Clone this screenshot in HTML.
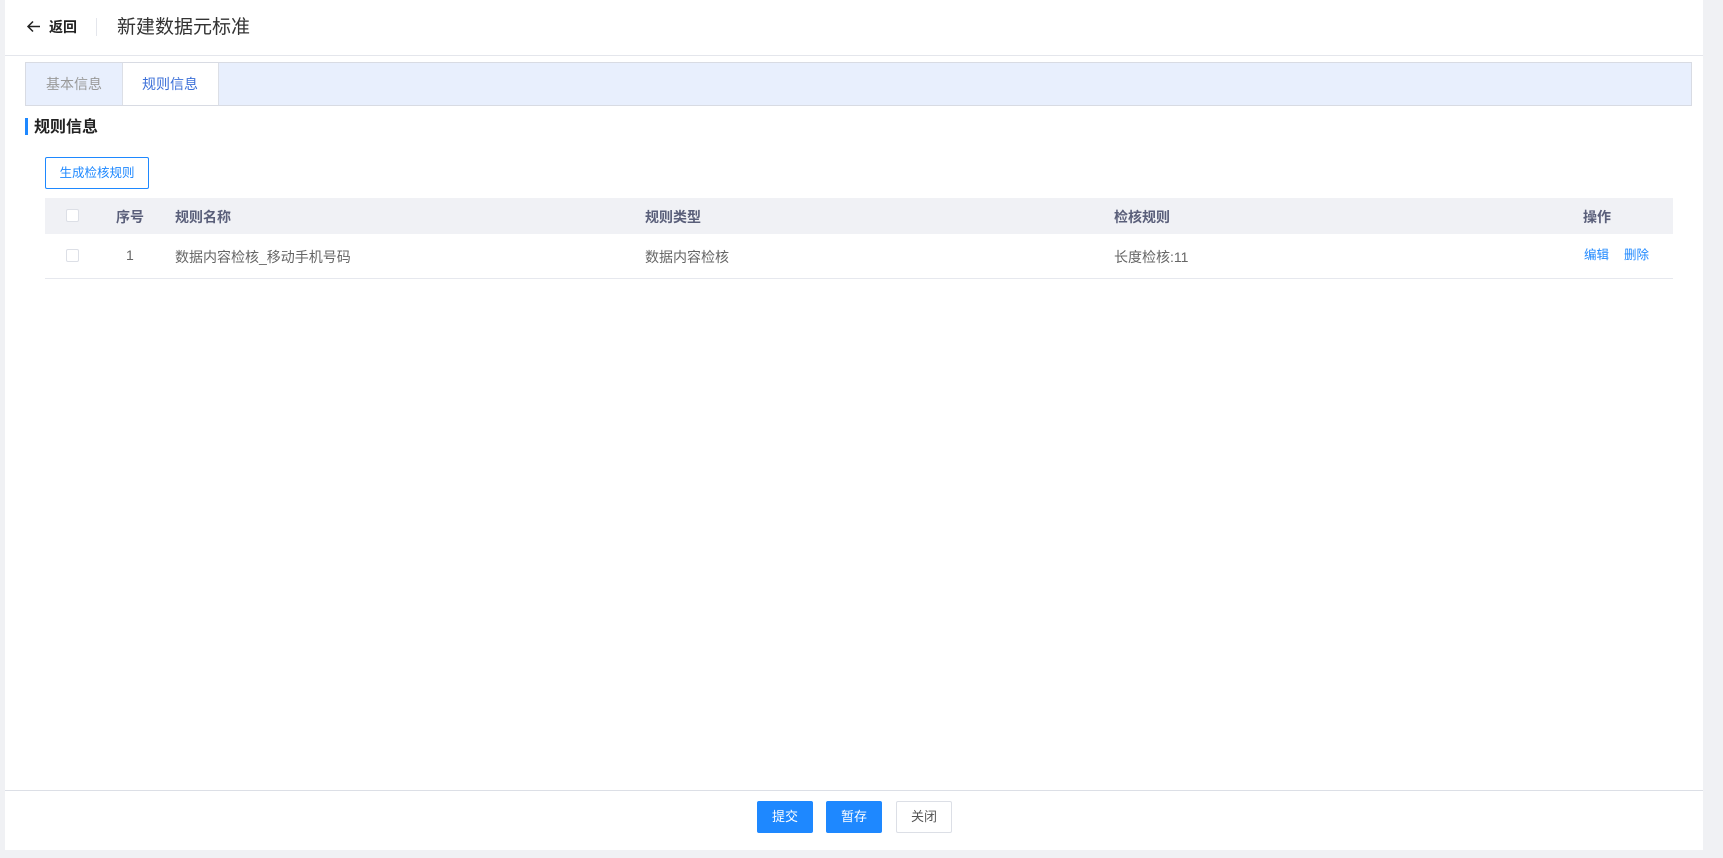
<!DOCTYPE html>
<html><head><meta charset="utf-8"><style>
*{margin:0;padding:0;box-sizing:border-box}
body{width:1723px;height:858px;background:#f0f1f4;font-family:"Liberation Sans","Noto Sans CJK SC",sans-serif;position:relative;overflow:hidden}
.panel{position:absolute;left:5px;top:0;width:1698px;height:850px;background:#fff}
.a{position:absolute;white-space:nowrap}
.hdr{position:absolute;left:5px;top:0;width:1698px;height:56px;border-bottom:1px solid #e4e6ec}
.tabs{position:absolute;left:25px;top:62px;width:1667px;height:44px;background:#e8effd;border:1px solid #d8dbe3}
.btn{position:absolute;top:801px;height:32px;width:56px;font-size:13px;text-align:center;line-height:32px;border-radius:2px}
.th{font-size:14px;color:#5a5f7a;font-weight:bold;top:207px}
.td{font-size:14px;color:#666;top:247px}
.cb{position:absolute;width:13px;height:13px;border:1px solid #dcdfe6;background:#fff;border-radius:2px}
</style></head><body>
<div class="panel"></div>
<div class="hdr"></div>
<svg class="a" style="left:26px;top:19px" width="15" height="15" viewBox="0 0 15 15"><path d="M14 7.5H2M7 2.5L2 7.5L7 12.5" fill="none" stroke="#222" stroke-width="1.5"/></svg>
<div class="a" style="left:49px;top:17px;font-size:14px;font-weight:bold;color:#222;line-height:20px">返回</div>
<div class="a" style="left:96px;top:18px;width:1px;height:18px;background:#e4e6ec"></div>
<div class="a" style="left:117px;top:15px;font-size:19px;color:#333;line-height:26px">新建数据元标准</div>
<div class="tabs"></div>
<div class="a" style="left:122px;top:63px;width:97px;height:42px;background:#fff;border-left:1px solid #dcdfe6;border-right:1px solid #dcdfe6"></div>
<div class="a" style="left:46px;top:74px;font-size:14px;color:#999;line-height:20px">基本信息</div>
<div class="a" style="left:142px;top:74px;font-size:14px;color:#3b6fd8;line-height:20px">规则信息</div>
<div class="a" style="left:25px;top:118px;width:3px;height:17px;background:#1e88ff"></div>
<div class="a" style="left:34px;top:117px;font-size:16px;font-weight:bold;color:#222;line-height:22px">规则信息</div>
<div class="a" style="left:45px;top:157px;width:104px;height:32px;border:1px solid #1e88ff;border-radius:2px;color:#1e88ff;font-size:12.5px;text-align:center;line-height:30px">生成检核规则</div>
<div class="a" style="left:45px;top:198px;width:1628px;height:36px;background:#f0f1f5"></div>
<div class="a" style="left:45px;top:278px;width:1628px;height:1px;background:#e6e8ee"></div>
<div class="cb" style="left:66px;top:209px"></div>
<div class="cb" style="left:66px;top:249px"></div>
<div class="a th" style="left:116px">序号</div>
<div class="a th" style="left:175px">规则名称</div>
<div class="a th" style="left:645px">规则类型</div>
<div class="a th" style="left:1114px">检核规则</div>
<div class="a th" style="left:1583px">操作</div>
<div class="a td" style="left:126px">1</div>
<div class="a td" style="left:175px">数据内容检核_移动手机号码</div>
<div class="a td" style="left:645px">数据内容检核</div>
<div class="a td" style="left:1114px">长度检核:11</div>
<div class="a" style="left:1584px;top:247px;font-size:12.5px;color:#1e88ff;line-height:16px">编辑</div>
<div class="a" style="left:1624px;top:247px;font-size:12.5px;color:#1e88ff;line-height:16px">删除</div>
<div class="a" style="left:5px;top:790px;width:1698px;height:1px;background:#dcdfe6"></div>
<div class="btn" style="left:757px;background:#1e88ff;color:#fff">提交</div>
<div class="btn" style="left:826px;background:#1e88ff;color:#fff">暂存</div>
<div class="btn" style="left:896px;border:1px solid #dcdfe6;color:#555;line-height:30px">关闭</div>
</body></html>
